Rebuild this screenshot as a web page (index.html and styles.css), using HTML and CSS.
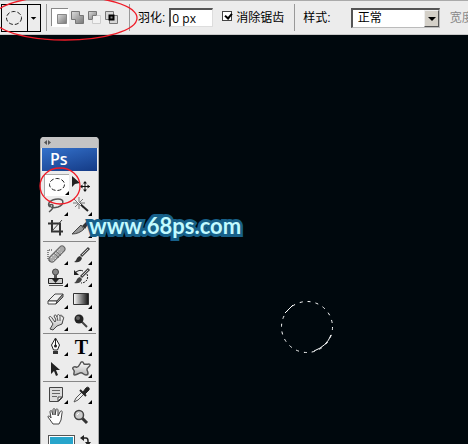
FILE: index.html
```html
<!DOCTYPE html>
<html lang="zh-CN">
<head>
<meta charset="utf-8">
<title>Ps</title>
<link rel="stylesheet" href="styles.css">
</head>
<body>
<svg width="0" height="0" class="defs" aria-hidden="true">
  <defs>
    <linearGradient id="gray" x1="0" y1="0" x2="1" y2="1"><stop offset="0" stop-color="#ddd"/><stop offset="1" stop-color="#777"/></linearGradient>
    <linearGradient id="ramp"><stop offset="0" stop-color="#fff"/><stop offset="1" stop-color="#111"/></linearGradient>
    <linearGradient id="light" x1="0" y1="0" x2="0" y2="1"><stop offset="0" stop-color="#fff"/><stop offset="1" stop-color="#b5b5b5"/></linearGradient>
  </defs>
</svg>
<header class="options">
  <button class="preset" aria-label="Elliptical marquee">
    <svg width="25" height="26" viewBox="0 0 25 26"><ellipse cx="12" cy="13" rx="7.500" ry="6.500" fill="none" stroke="#222" stroke-dasharray="4 2"/></svg>
    <svg class="preset-arrow" width="13" height="26" viewBox="0 0 13 26"><path d="M3 12h6l-3 3z" fill="#000"/></svg>
  </button>
  <div class="modes">
    <button class="mode selected" aria-label="New"><svg width="17" height="18" viewBox="0 0 17 18"><path d="M5.500 5.500h9v9h-9z" fill="url(#gray)" stroke="#888"/></svg></button>
    <button class="mode" aria-label="Add"><svg width="17" height="18" viewBox="0 0 17 18"><path d="M2.500 2.500h8v4h4v8h-8v-4h-4z" fill="url(#gray)" stroke="#777"/></svg></button>
    <button class="mode" aria-label="Subtract"><svg width="17" height="18" viewBox="0 0 17 18"><path d="M2.500 2.500h8v4h-4v4h-4z" fill="url(#gray)" stroke="#777"/><path d="M6.500 6.500h8v8h-8z" fill="#f2f2f2" stroke="#ccc"/><path d="M6.500 10.500v-4h4" fill="none" stroke="#777"/></svg></button>
    <button class="mode" aria-label="Intersect"><svg width="17" height="18" viewBox="0 0 17 18"><path d="M2.500 2.500h8v8h-8zM6.500 6.500h8v8h-8z" fill="#d6d6d6" stroke="#777"/><path d="M6.500 6.500h4v4h-4z" fill="#888" stroke="#000" stroke-width="2"/></svg></button>
  </div>
  <label class="feather" for="feather">羽化:</label>
  <input class="field" id="feather" type="text" value="0 px">
  <input class="check" id="anti" type="checkbox" checked>
  <label class="anti" for="anti">消除锯齿</label>
  <label class="style-label" for="style">样式:</label>
  <div class="combo">
    <select id="style"><option>正常</option></select>
    <span class="drop"></span>
  </div>
  <span class="width-label">宽度</span>
</header>
<main class="canvas">
  <svg class="selection" width="54" height="54" viewBox="0 0 54 54" fill="none" stroke="#fff">
    <circle cx="27" cy="27" r="25.500" stroke-dasharray="3 5"/>
    <path d="M5 13l8-8M34 51Q47 46 51 35"/>
  </svg>
</main>
<aside class="panel">
  <div class="grip"><svg width="7" height="5" viewBox="0 0 7 5"><path d="M3 0v5L0 2.500zM4 0v5l3-2.500z" fill="#555"/></svg></div>
  <div class="brand">Ps</div>
  <div class="tools">
    <button class="tool selected" aria-label="Marquee"><svg viewBox="0 0 25 22"><ellipse cx="13" cy="10.500" rx="7.500" ry="6" fill="none" stroke="#222" stroke-dasharray="4 2"/><path class="more" d="M25 17v4h-4z"/></svg></button>
    <button class="tool" aria-label="Move"><svg viewBox="0 0 25 22"><path d="M3 2v11l3-3 5-1z" fill="#222"/><path d="M16 8v9M12 12.500h9" stroke="#111"/><path d="M16 7l2 2.500h-4zM16 18l2-2.500h-4zM11 12.500l2.500-2v4zM21 12.500l-2.500-2v4z" fill="#111"/></svg></button>
    <button class="tool" aria-label="Lasso"><svg viewBox="0 0 25 22"><path d="M6 11C2 8 7 3 14 3s6 6 0 8c-4 1-7 1-8-1s3-2 3 0-1 4-4 6" fill="none" stroke="#555" stroke-width="1.500"/><path class="more" d="M24 16v4h-4z"/></svg></button>
    <button class="tool" aria-label="Magic wand"><svg viewBox="0 0 25 22"><path d="M10 7l9 8" stroke="#222" stroke-width="2"/><path d="M10 1v12M4 7h12M5 3l9 9M14 3l-8 8" stroke="#777"/><path d="M8 5l4 4" stroke="#fff"/><path class="more" d="M23 16v4h-4z"/></svg></button>
    <button class="tool" aria-label="Crop"><svg viewBox="0 0 25 22"><path d="M4 5.500h12v12M8 2v11.500h11" fill="none" stroke="#333" stroke-width="2"/><path d="M18 2L8 13" stroke="#444"/></svg></button>
    <button class="tool" aria-label="Slice"><svg viewBox="0 0 25 22"><path d="M3 16L12 7l3 4c-3 3-7 5-12 5z" fill="#999" stroke="#444"/><path d="M13 8l5-5 2 2-4 6z" fill="#333"/><path class="more" d="M23 16v4h-4z"/></svg></button>
  </div>
  <div class="tools">
    <button class="tool" aria-label="Healing brush"><svg viewBox="0 0 25 22"><path d="M8 6H4v9l2 3" fill="none" stroke="#222" stroke-dasharray="1 1"/><path d="M8 15L18 5" stroke="#666" stroke-width="7" stroke-linecap="round"/><path d="M8 15L18 5" stroke="#aaa" stroke-width="5" stroke-linecap="round"/><path d="M7 14l9-9M9 17l9-9" stroke="#eee" stroke-dasharray="1 2"/><path d="M10 9l5 5M12 7l5 5" stroke="#777"/><path class="more" d="M24 17v4h-4z"/></svg></button>
    <button class="tool" aria-label="Brush"><svg viewBox="0 0 25 22"><path d="M12 12l8-8" stroke="#444" stroke-width="3"/><path d="M13 11l6-6" stroke="#ccc"/><path d="M5 18c3-1 2-5 6-6l2 2c-1 4-4 5-8 4z" fill="#333"/><path class="more" d="M23 17v4h-4z"/></svg></button>
    <button class="tool" aria-label="Stamp"><svg viewBox="0 0 25 22"><circle cx="11.500" cy="6" r="3" fill="#888" stroke="#444"/><path d="M10 9h3v4h-3z" fill="#555"/><path d="M4.500 12.500h14v5h-14z" fill="#ccc" stroke="#222"/><path d="M8 13h7l-3.500 4z" fill="#222"/><path d="M5 19.500h14" stroke="#555"/><path class="more" d="M24 17v4h-4z"/></svg></button>
    <button class="tool" aria-label="History brush"><svg viewBox="0 0 25 22"><path d="M12 11l8-8" stroke="#444" stroke-width="3"/><path d="M13 10l6-6" stroke="#ccc"/><path d="M5 17c3-1 2-5 6-6l2 2c-1 4-4 5-8 4z" fill="#444"/><path d="M5 4v5h5z" fill="#222"/><path d="M7 6c3-2 5-2 7-1" fill="none" stroke="#222"/><path d="M18 8c2 5-1 9-6 9" fill="none" stroke="#222" stroke-dasharray="2 1"/><path class="more" d="M23 17v4h-4z"/></svg></button>
    <button class="tool" aria-label="Eraser"><svg viewBox="0 0 25 22"><path d="M4 13l7-7h8l-6 7z" fill="#eee" stroke="#444"/><path d="M4 13v3h8l1-3z" fill="#fff" stroke="#444"/><path d="M13 13l6-7v3l-7 7z" fill="#999" stroke="#444"/><path class="more" d="M24 17v4h-4z"/></svg></button>
    <button class="tool" aria-label="Gradient"><svg viewBox="0 0 25 22"><path d="M4.500 5.500h15v11h-15z" fill="url(#ramp)" stroke="#333"/><path class="more" d="M23 17v4h-4z"/></svg></button>
    <button class="tool" aria-label="Smudge"><svg viewBox="0 0 25 22"><path d="M6 19l3-5-4-6c0-2 2-2 3 0l3 4 1-2-2-4c1-2 2-1 3 1 0-3 2-3 3-1 1-2 2-1 2 1 2-1 2 1 1 3l-1 4-5 2-4 4z" fill="url(#light)" stroke="#444"/><path d="M13 7l1 4M16 6v5" stroke="#555"/><path class="more" d="M24 17v4h-4z"/></svg></button>
    <button class="tool" aria-label="Burn"><svg viewBox="0 0 25 22"><path d="M12 11l6 6" stroke="#444" stroke-width="2"/><circle cx="10" cy="9" r="4.500" fill="#222"/><circle cx="9" cy="8" r="2" fill="#666"/><path class="more" d="M23 17v4h-4z"/></svg></button>
  </div>
  <div class="tools">
    <button class="tool" aria-label="Pen"><svg viewBox="0 0 25 22"><path d="M11.500 2L7.500 9l2 5h4l2-5z" fill="#fff" stroke="#222"/><path d="M11.500 3v6" stroke="#222"/><circle cx="11.500" cy="10" r="1.500" fill="#222"/><path d="M9 15h5v3H9z" fill="#333"/><path class="more" d="M24 16v4h-4z"/></svg></button>
    <button class="tool letter" aria-label="Type">T<svg viewBox="0 0 25 22"><path class="more" d="M23 16v4h-4z"/></svg></button>
    <button class="tool" aria-label="Path selection"><svg viewBox="0 0 25 22"><path d="M7 4v12l3-3 2 5 2-1-2-5h4z" fill="#222"/><path class="more" d="M24 16v4h-4z"/></svg></button>
    <button class="tool" aria-label="Shape"><svg viewBox="0 0 25 22"><path d="M11 6c1-3 3-3 4 0 3 1 6-1 6 1s-4 3-3 5 2 5-1 5-3-3-6-2-7 4-6 0c1-2 0-3-1-4s1-3 3-2 3-1 4-3z" fill="url(#light)" stroke="#555" stroke-width="1.500"/><path class="more" d="M23 16v4h-4z"/></svg></button>
  </div>
  <div class="tools">
    <button class="tool" aria-label="Notes"><svg viewBox="0 0 25 22"><path d="M5.500 3.500h13v10l-4 4h-9z" fill="#ddd" stroke="#444"/><path d="M8 6.500h8M8 9.500h8M8 12.500h5" stroke="#666"/><path d="M18 13h-4v4z" fill="#fff" stroke="#444"/><path class="more" d="M24 16v4h-4z"/></svg></button>
    <button class="tool" aria-label="Eyedropper"><svg viewBox="0 0 25 22"><path d="M5 18l2-4 6-6 2 2-6 6z" fill="#eee" stroke="#555"/><path d="M11 6l6 6" stroke="#222" stroke-width="2"/><path d="M14 8l3-4c2-2 4 0 3 2l-4 4z" fill="#222" stroke="#222"/><path class="more" d="M23 16v4h-4z"/></svg></button>
    <button class="tool" aria-label="Hand"><svg viewBox="0 0 25 22"><path d="M9 18L4 11c0-2 2-1 3 1L6 6c0-2 2-2 2 0l1 3V4c0-2 2-2 2 0v5l1-5c0-2 2-1 2 0v6l2-4c1-2 3-1 2 1l-1 7-2 4z" fill="#fff" stroke="#444"/></svg></button>
    <button class="tool" aria-label="Zoom"><svg viewBox="0 0 25 22"><path d="M13 12l5 5" stroke="#333" stroke-width="3"/><circle cx="10" cy="9" r="4.500" fill="#ccc" stroke="#444" stroke-width="1.500"/><path d="M8 9l2-2" stroke="#fff"/></svg></button>
  </div>
  <div class="colors">
    <button class="swatch" aria-label="Foreground"></button>
    <button class="swap" aria-label="Swap"><svg width="11" height="11" viewBox="0 0 11 11"><path d="M3 3h3q2 0 2 3v2" fill="none" stroke="#222" stroke-width="1.500"/><path d="M0 3l4-3v6zM5 7h6l-3 4z" fill="#222"/></svg></button>
  </div>
</aside>
<p class="watermark">www.68ps.com</p>
<svg class="marks" width="140" height="210" viewBox="0 0 140 210" fill="none" stroke="#f01c28" stroke-width="1.300"><ellipse cx="65" cy="18" rx="72" ry="22"/><ellipse cx="60" cy="186" rx="20" ry="18"/></svg>
</body>
</html>
```
FILE: styles.css
```css
* { box-sizing: border-box; }
body {
  margin: 0;
  height: 100vh;
  position: relative;
  overflow: hidden;
  display: flex;
  flex-direction: column;
  background: #00080d;
  color: #000;
  font: 12px/16px "Liberation Sans", "Noto Sans CJK SC", sans-serif;
}
button { padding: 0; border: 0; background: none; color: inherit; }
svg { display: block; }
.defs { position: absolute; }
.options {
  display: flex;
  align-items: center;
  height: 35px;
  flex: none;
  padding-left: 1px;
  background: #ececec;
  border-top: 1px solid #aaa;
  border-bottom: 1px solid #c8c8c8;
  white-space: nowrap;
  overflow: hidden;
}
.options > * { flex: none; }
.preset { display: flex; border: 1px solid #000; }
.preset-arrow { border-left: 1px solid #000; }
.modes {
  display: flex;
  height: 27px;
  align-items: center;
  margin-left: 5px;
  padding: 0 9px 0 5px;
  border: solid #999;
  border-width: 0 1px;
}
.mode.selected { background: #fff; box-shadow: -1px -1px #888; }
.feather { margin-left: 8px; }
.feather, .anti, .style-label, .width-label { padding-top: 1px; }
.field {
  width: 44px;
  height: 19px;
  margin-left: 4px;
  padding: 0 1px;
  border: 1px solid #ddd;
  border-top: 2px solid #555;
  border-left: 2px solid #555;
  background: #fff;
  font: 12px/16px "Open Sans", sans-serif;
}
.check {
  appearance: none;
  width: 10px;
  height: 10px;
  margin: 0 4px 4px 9px;
  border: 1px solid #444;
  background: #fff;
}
.check:checked::before {
  content: "";
  display: block;
  width: 3px;
  height: 5px;
  margin: 0 0 0 3px;
  border: solid #000;
  border-width: 0 2px 2px 0;
  transform: rotate(40deg);
}
.anti { padding-right: 10px; line-height: 26px; border-right: 1px solid #999; }
.style-label { margin-left: 8px; }
.combo {
  position: relative;
  width: 89px;
  height: 20px;
  margin-left: 20px;
  border: 1px solid #bbb;
  border-top: 2px solid #555;
  border-left: 2px solid #555;
  background: #fff;
}
.combo select {
  appearance: none;
  display: block;
  width: 100%;
  height: 100%;
  padding: 0 5px;
  border: 0;
  background: #fff;
  color: #000;
  font: inherit;
}
.drop {
  position: absolute;
  top: 0;
  right: 0;
  bottom: 0;
  width: 15px;
  border: 1px solid #555;
  border-top-color: #eee;
  border-left-color: #eee;
  background: #d4d0c8;
  pointer-events: none;
}
.drop::after {
  content: "";
  display: block;
  margin: 6px 3px;
  width: 0;
  border: 4px solid transparent;
  border-top-color: #000;
  border-bottom: 0;
}
.width-label { margin-left: 10px; color: #888; }
.canvas { flex: 1; }
.selection { position: absolute; left: 280px; top: 300px; }
.panel {
  position: absolute;
  left: 40px;
  top: 137px;
  bottom: 0;
  width: 59px;
  padding: 0 2px;
  background: #ececec;
  border: solid #aaa;
  border-width: 0 1px;
  border-radius: 4px 4px 0 0;
  overflow: hidden;
}
.grip { height: 11px; margin: 0 -2px; padding: 3px; background: #c4c4c4; }
.brand {
  height: 23px;
  margin: 0 -1px 2px;
  padding-left: 8px;
  background: linear-gradient(165deg, #3472cc, #143a85);
  color: #fff;
  font: 600 16px/23px "Open Sans", sans-serif;
}
.tools {
  display: grid;
  grid-template-columns: 25px 25px;
  grid-auto-rows: 22px;
  padding: 1px;
  border-bottom: 1px solid #888;
  margin-bottom: 1px;
}
.tools:nth-last-child(2) { border: 0; }
.tool svg { width: 25px; height: 22px; }
.tool.selected { background: #fff; box-shadow: inset 1px 1px #aaa; }
.more { fill: #000; }
.letter { position: relative; font: 700 20px/20px "Liberation Serif", serif; }
.letter svg { position: absolute; left: 0; top: 0; }
.colors { display: flex; padding: 5px; gap: 5px; }
.swatch { width: 28px; height: 28px; border: 1px solid #555; background: #27a5cb; box-shadow: inset 0 0 0 1px #fff; }
.swap { align-self: flex-start; }
.watermark {
  position: absolute;
  left: 89px;
  top: 213px;
  margin: 0;
  color: #c2faff;
  font: 700 22px/26px Lato, sans-serif;
  -webkit-text-stroke: 6px #176089;
  stroke-linejoin: round;
  paint-order: stroke fill;
}
.marks { position: absolute; left: 0; top: 0; pointer-events: none; }
```
